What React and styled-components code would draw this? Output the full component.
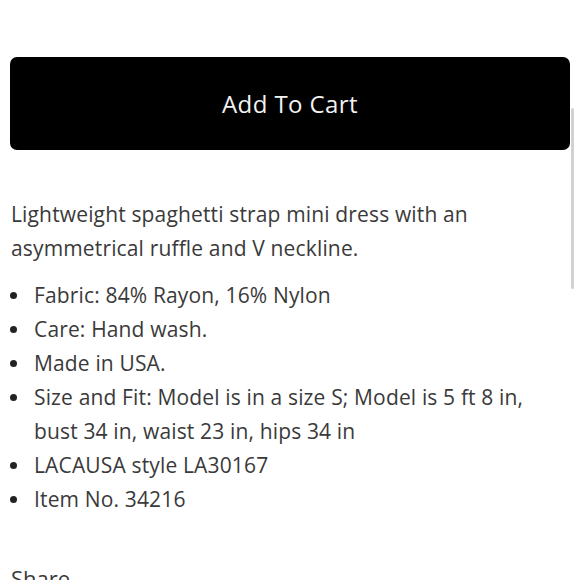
import React from 'react'
import styled, { createGlobalStyle } from 'styled-components'

const GlobalStyle = createGlobalStyle`
    html, body {
        margin: 0;
        padding: 0;
        background: #fff;
        overflow: hidden;
    }
    body {
        font-family: "Open Sans", "Noto Sans", sans-serif;
    }
`

const Page = styled.div`
    position: relative;
    width: 580px;
    height: 580px;
    overflow: hidden;
    padding: 57px 10px 0 10px;
    box-sizing: border-box;
`

const CartButton = styled.button`
    display: flex;
    align-items: center;
    justify-content: center;
    width: 560px;
    height: 93px;
    border: none;
    border-radius: 7px;
    background: #000;
    color: #f2f2f2;
    font-family: inherit;
    font-size: 24px;
    letter-spacing: 0.4px;
    padding: 0;
    cursor: pointer;
`

const Content = styled.div`
    padding-right: 14px;
`

const Description = styled.p`
    margin: 47px 0 0 1px;
    font-size: 21px;
    line-height: 34px;
    letter-spacing: 0.15px;
    color: #3a3a3a;
`

const Details = styled.ul`
    list-style: none;
    margin: 13px 0 0 0;
    padding: 0;
`

const Detail = styled.li`
    position: relative;
    padding-left: 24px;
    font-size: 21px;
    line-height: 34px;
    letter-spacing: 0.15px;
    color: #3a3a3a;

    &::before {
        content: "";
        position: absolute;
        left: 0;
        top: 14px;
        width: 7px;
        height: 7px;
        border-radius: 50%;
        background: #222;
    }
`

const ShareHeading = styled.h4`
    margin: 47px 0 0 1px;
    font-size: 22px;
    line-height: 30px;
    font-weight: 400;
    color: #3a3a3a;
`

const ScrollThumb = styled.div`
    position: absolute;
    top: 108px;
    left: 571px;
    width: 3px;
    height: 181px;
    background: #d2d2d2;
    border-radius: 2px;
`

const details = [
    'Fabric: 84% Rayon, 16% Nylon',
    'Care: Hand wash.',
    'Made in USA.',
    'Size and Fit: Model is in a size S; Model is 5 ft 8 in, bust 34 in, waist 23 in, hips 34 in',
    'LACAUSA style LA30167',
    'Item No. 34216'
]

export default function App() {
    return (
        <Page>
            <GlobalStyle />
            <CartButton type="button">Add To Cart</CartButton>
            <Content>
                <Description>
                    Lightweight spaghetti strap mini dress with an asymmetrical ruffle and V neckline.
                </Description>
                <Details>
                    {details.map(d => <Detail key={d}>{d}</Detail>)}
                </Details>
                <ShareHeading>Share</ShareHeading>
            </Content>
            <ScrollThumb />
        </Page>
    )
}
